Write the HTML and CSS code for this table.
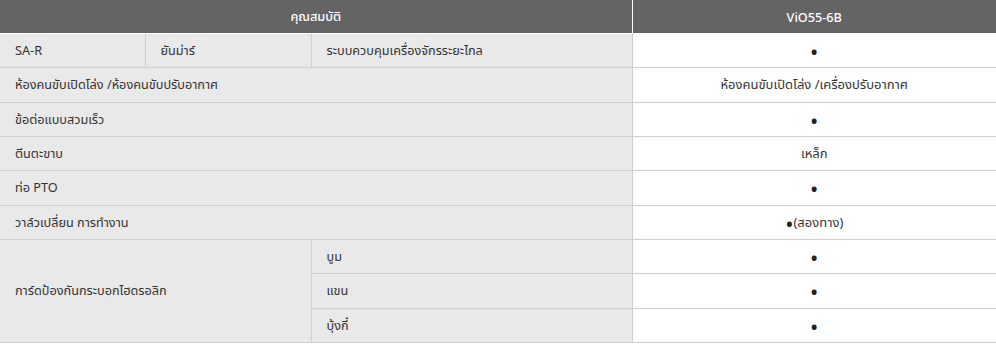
FILE: index.html
```html
<!DOCTYPE html>
<html lang="th">
<head>
<meta charset="utf-8">
<link rel="stylesheet" href="styles.css">
</head>
<body>
<table class="spec">
  <colgroup>
    <col class="c1"><col class="c2"><col class="c3"><col class="c4">
  </colgroup>
  <thead>
    <tr><th colspan="3">คุณสมบัติ</th><th>ViO55-6B</th></tr>
  </thead>
  <tbody>
    <tr><td class="lab">SA-R</td><td class="lab">ยันม่าร์</td><td class="lab">ระบบควบคุมเครื่องจักรระยะไกล</td><td class="val"><span class="dot">•</span></td></tr>
    <tr><td class="lab" colspan="3">ห้องคนขับเปิดโล่ง /ห้องคนขับปรับอากาศ</td><td class="val">ห้องคนขับเปิดโล่ง /เครื่องปรับอากาศ</td></tr>
    <tr><td class="lab" colspan="3">ข้อต่อแบบสวมเร็ว</td><td class="val"><span class="dot">•</span></td></tr>
    <tr><td class="lab" colspan="3">ตีนตะขาบ</td><td class="val">เหล็ก</td></tr>
    <tr><td class="lab" colspan="3">ท่อ PTO</td><td class="val"><span class="dot">•</span></td></tr>
    <tr><td class="lab" colspan="3">วาล์วเปลี่ยน การทำงาน</td><td class="val"><span class="dot">•</span>(สองทาง)</td></tr>
    <tr><td class="lab" colspan="2" rowspan="3">การ์ดป้องกันกระบอกไฮดรอลิก</td><td class="lab">บูม</td><td class="val"><span class="dot">•</span></td></tr>
    <tr><td class="lab">แขน</td><td class="val"><span class="dot">•</span></td></tr>
    <tr><td class="lab">บุ้งกี๋</td><td class="val"><span class="dot">•</span></td></tr>
  </tbody>
</table>
</body>
</html>
```
FILE: styles.css
```css
html, body {
  margin: 0;
  padding: 0;
  background: #fff;
}
body {
  font-family: "Noto Sans", "Noto Sans Thai", "DejaVu Sans", sans-serif;
  font-size: 12.7px;
  color: #333;
}
.spec {
  width: 996px;
  border-collapse: collapse;
  table-layout: fixed;
}
.c1 { width: 145px; }
.c2 { width: 166px; }
.c3 { width: 321px; }
.c4 { width: 364px; }
.spec th {
  background: #646464;
  color: #fff;
  font-weight: 500;
  height: 33px;
  padding: 0 15px;
  text-align: center;
  border-left: 1px solid #fff;
  border-bottom: 1px solid #fff;
}
.spec th:first-child { border-left: none; }
.spec td {
  padding: 8px 15px;
  line-height: 17.33px;
  border: 1px solid #cfcfcf;
  border-top: none;
  vertical-align: middle;
}
.spec td.lab {
  background: #e9e9e9;
  text-align: left;
}
.spec td.val {
  background: #fff;
  text-align: center;
  font-size: 13px;
}
.dot {
  font-size: 22px;
  line-height: 0;
  color: #222;
  vertical-align: -5px;
}
.spec tr td:first-child { border-left: none; }
.spec tr td:last-child { border-right: none; }
```
